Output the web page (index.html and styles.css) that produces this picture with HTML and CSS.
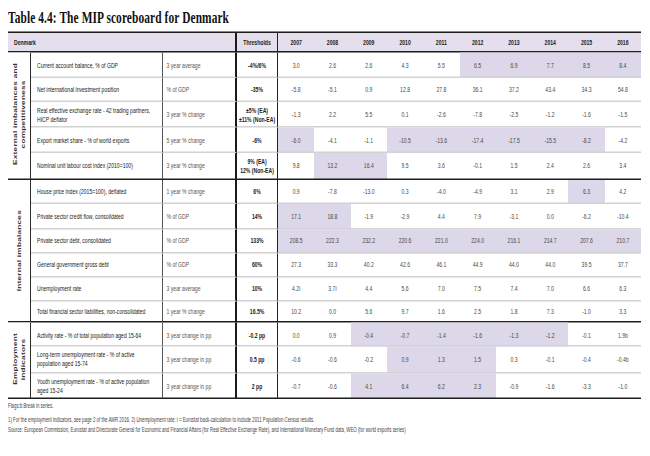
FILE: index.html
```html
<!DOCTYPE html>
<html lang="en">
<head>
<meta charset="utf-8">
<title>Table 4.4: The MIP scoreboard for Denmark</title>
<link rel="stylesheet" href="styles.css">
</head>
<body>
<div class="page">
  <h1 class="title">Table 4.4: The MIP scoreboard for Denmark</h1>
  <table class="board">
    <colgroup>
      <col class="c-cat"><col class="c-ind"><col class="c-unit"><col class="c-thr">
      <col class="c-yr"><col class="c-yr"><col class="c-yr"><col class="c-yr"><col class="c-yr">
      <col class="c-yr"><col class="c-yr"><col class="c-yr"><col class="c-yr"><col class="c-yr">
    </colgroup>
    <thead>
      <tr class="head">
        <th colspan="3" class="country">Denmark</th>
        <th class="thr">Thresholds</th>
        <th>2007</th><th>2008</th><th>2009</th><th>2010</th><th>2011</th>
        <th>2012</th><th>2013</th><th>2014</th><th>2015</th><th>2016</th>
      </tr>
    </thead>
    <tbody>
      <tr class="h26">
        <th rowspan="5" class="cat"><span class="rot">External imbalances and<br>competitiveness</span></th>
        <td class="ind">Current account balance, % of GDP</td>
        <td class="unit">3 year average</td>
        <td class="thr">-4%/6%</td>
        <td>3.0</td><td>2.6</td><td>2.6</td><td>4.3</td><td>5.5</td>
        <td class="hl">6.5</td><td class="hl">6.9</td><td class="hl">7.7</td><td class="hl">8.5</td><td class="hl">8.4</td>
      </tr>
      <tr class="h24">
        <td class="ind">Net international investment position</td>
        <td class="unit">% of GDP</td>
        <td class="thr">-35%</td>
        <td>-5.8</td><td>-5.1</td><td>0.9</td><td>12.8</td><td>27.8</td>
        <td>36.1</td><td>37.2</td><td>43.4</td><td>34.3</td><td>54.8</td>
      </tr>
      <tr class="h26">
        <td class="ind">Real effective exchange rate - 42 trading partners, HICP deflator</td>
        <td class="unit">3 year % change</td>
        <td class="thr">±5% (EA)<br>±11% (Non-EA)</td>
        <td>-1.3</td><td>2.2</td><td>5.5</td><td>0.1</td><td>-2.6</td>
        <td>-7.8</td><td>-2.5</td><td>-1.2</td><td>-1.6</td><td>-1.5</td>
      </tr>
      <tr class="h25">
        <td class="ind">Export market share - % of world exports</td>
        <td class="unit">5 year % change</td>
        <td class="thr">-6%</td>
        <td class="hl">-6.0</td><td>-4.1</td><td>-1.1</td><td class="hl">-10.5</td><td class="hl">-13.6</td>
        <td class="hl">-17.4</td><td class="hl">-17.5</td><td class="hl">-15.5</td><td class="hl">-8.2</td><td>-4.2</td>
      </tr>
      <tr class="h27 end">
        <td class="ind">Nominal unit labour cost index (2010=100)</td>
        <td class="unit">3 year % change</td>
        <td class="thr">9% (EA)<br>12% (Non-EA)</td>
        <td>9.8</td><td class="hl">13.2</td><td class="hl">16.4</td><td>9.5</td><td>3.6</td>
        <td>-0.1</td><td>1.5</td><td>2.4</td><td>2.6</td><td>3.4</td>
      </tr>

      <tr class="h24">
        <th rowspan="6" class="cat"><span class="rot">Internal imbalances</span></th>
        <td class="ind">House price index (2015=100), deflated</td>
        <td class="unit">1 year % change</td>
        <td class="thr">6%</td>
        <td>0.9</td><td>-7.8</td><td>-13.0</td><td>0.3</td><td>-4.0</td>
        <td>-4.9</td><td>3.1</td><td>2.9</td><td class="hl">6.3</td><td>4.2</td>
      </tr>
      <tr class="h25">
        <td class="ind">Private sector credit flow, consolidated</td>
        <td class="unit">% of GDP</td>
        <td class="thr">14%</td>
        <td class="hl">17.1</td><td class="hl">18.8</td><td>-1.9</td><td>-2.9</td><td>4.4</td>
        <td>7.9</td><td>-3.1</td><td>0.0</td><td>-6.2</td><td>-10.4</td>
      </tr>
      <tr class="h24">
        <td class="ind">Private sector debt, consolidated</td>
        <td class="unit">% of GDP</td>
        <td class="thr">133%</td>
        <td class="hl">208.5</td><td class="hl">222.3</td><td class="hl">232.2</td><td class="hl">220.6</td><td class="hl">221.0</td>
        <td class="hl">224.0</td><td class="hl">216.1</td><td class="hl">214.7</td><td class="hl">207.6</td><td class="hl">210.7</td>
      </tr>
      <tr class="h24">
        <td class="ind">General government gross debt</td>
        <td class="unit">% of GDP</td>
        <td class="thr">60%</td>
        <td>27.3</td><td>33.3</td><td>40.2</td><td>42.6</td><td>46.1</td>
        <td>44.9</td><td>44.0</td><td>44.0</td><td>39.5</td><td>37.7</td>
      </tr>
      <tr class="h24">
        <td class="ind">Unemployment rate</td>
        <td class="unit">3 year average</td>
        <td class="thr">10%</td>
        <td>4.2i</td><td>3.7i</td><td>4.4</td><td>5.6</td><td>7.0</td>
        <td>7.5</td><td>7.4</td><td>7.0</td><td>6.6</td><td>6.3</td>
      </tr>
      <tr class="h22 end">
        <td class="ind">Total financial sector liabilities, non-consolidated</td>
        <td class="unit">1 year % change</td>
        <td class="thr">16.5%</td>
        <td>10.2</td><td>0.0</td><td>5.6</td><td>9.7</td><td>1.6</td>
        <td>2.5</td><td>1.8</td><td>7.3</td><td>-1.0</td><td>3.3</td>
      </tr>

      <tr class="h24">
        <th rowspan="3" class="cat"><span class="rot">Employment<br>indicators</span></th>
        <td class="ind">Activity rate - % of total population aged 15-64</td>
        <td class="unit">3 year change in pp</td>
        <td class="thr">-0.2 pp</td>
        <td>0.0</td><td>0.9</td><td class="hl">-0.4</td><td class="hl">-0.7</td><td class="hl">-1.4</td>
        <td class="hl">-1.6</td><td class="hl">-1.3</td><td class="hl">-1.2</td><td>-0.1</td><td>1.9b</td>
      </tr>
      <tr class="h26">
        <td class="ind">Long-term unemployment rate - % of active population aged 15-74</td>
        <td class="unit">3 year change in pp</td>
        <td class="thr">0.5 pp</td>
        <td>-0.6</td><td>-0.6</td><td>-0.2</td><td class="hl">0.9</td><td class="hl">1.3</td>
        <td class="hl">1.5</td><td>0.3</td><td>-0.1</td><td>-0.4</td><td>-0.4b</td>
      </tr>
      <tr class="h26 end">
        <td class="ind">Youth unemployment rate - % of active population aged 15-24</td>
        <td class="unit">3 year change in pp</td>
        <td class="thr">2 pp</td>
        <td>-0.7</td><td>-0.6</td><td class="hl">4.1</td><td class="hl">6.4</td><td class="hl">6.2</td>
        <td class="hl">2.3</td><td>-0.9</td><td>-1.6</td><td>-3.3</td><td>-1.0</td>
      </tr>
    </tbody>
  </table>
  <div class="notes">
    <p class="flags">Flags:b:Break in series.</p>
    <p>1) For the employment indicators, see page 2 of the AMR 2016. 2) Unemployment rate: i = Eurostat back-calculation to include 2011 Population Census results.</p>
    <p>Source: European Commission, Eurostat and Directorate General for Economic and Financial Affairs (for Real Effective Exchange Rate), and International Monetary Fund data, WEO (for world exports series)</p>
  </div>
</div>
</body>
</html>
```
FILE: styles.css
```css
/* The page is laid out at 2/3 of its final height and stretched
   vertically, which gives the condensed look of the printed table. */
* { box-sizing: border-box; }
html { height: 100%; background: #ffffff; }
body {
  margin: 0;
  min-height: 100%;
  background: #ffffff;
  font-family: "Liberation Sans", Arial, sans-serif;
  color: #222;
}

.page {
  margin-left: 8px;
  padding-top: 4.667px;
  width: 634px;
  transform: scaleY(1.5);
  transform-origin: 0 0;
}

.title {
  margin: 0;
  height: 13.333px;
  font-family: "Liberation Serif", "Times New Roman", serif;
  font-weight: bold;
  font-size: 11.4px;
  line-height: 13.333px;
  letter-spacing: 0.1px;
  color: #111;
  white-space: nowrap;
}

.board {
  margin-top: 3.333px;
  width: 633px;
  table-layout: fixed;
  border-collapse: separate;
  border-spacing: 0;
  font-size: 5.1px;
  line-height: 6px;
}
.c-cat { width: 23px; }
.c-ind { width: 132px; }
.c-unit { width: 74px; }
.c-thr { width: 41px; }
.c-yr { width: 36.3px; }

.board th, .board td {
  padding: 0 2px;
  vertical-align: middle;
  text-align: center;
  border-bottom: 1px solid #d2d2d2;
}
.board td { color: #4a4a4a; }

.head { height: 13.333px; }
.head th {
  background: #e4deed;
  border-top: 1px solid #1e1e1e;
  border-bottom: 1px solid #1e1e1e;
  font-weight: bold;
  color: #222;
}
.head .country { text-align: left; padding-left: 6px; border-right: 2px solid #1a1a1a; }
.head .thr { border-right: 1px solid #222; }

.h22 { height: 14.667px; }
.h24 { height: 16px; }
.h25 { height: 16.667px; }
.h26 { height: 17.333px; }
.h27 { height: 18px; }

.board .end td { border-bottom: 1px solid #1e1e1e; }

.board .cat {
  padding: 0;
  border-right: 1px solid #2b2b2b;
  border-bottom: 1px solid #1e1e1e;
  background: #fff;
}
.rot {
  display: inline-block;
  writing-mode: vertical-rl;
  transform: rotate(180deg);
  font-size: 5.5px;
  line-height: 8px;
  letter-spacing: 0.15px;
  font-weight: bold;
  color: #333;
  text-align: center;
  white-space: nowrap;
}

.board .ind {
  text-align: left;
  padding-left: 6px;
  padding-right: 3px;
  color: #222;
  border-right: 1px solid #555;
}
.board .unit {
  text-align: left;
  padding-left: 3.5px;
  color: #555;
  border-right: 2px solid #1a1a1a;
}
.board .thr {
  font-weight: bold;
  color: #222;
  border-right: 1px solid #222;
  padding: 0;
  white-space: nowrap;
}
.board .hl { background: #dcd7e9; }

.notes { font-size: 4.35px; line-height: 6.667px; color: #444; }
.notes p { margin: 0; white-space: nowrap; }
.notes .flags { margin-top: 2px; margin-bottom: 2.667px; }
```
